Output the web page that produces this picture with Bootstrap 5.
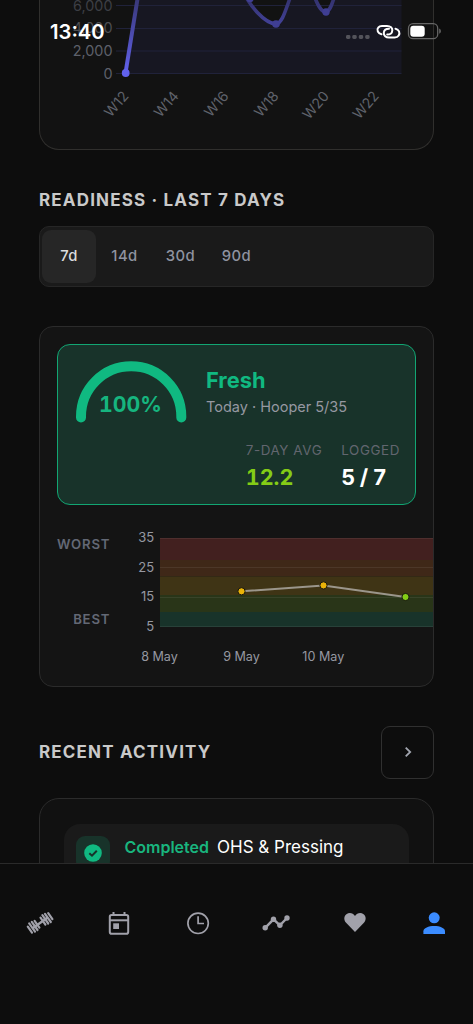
<!DOCTYPE html>
<html lang="en" data-bs-theme="dark">
<head>
<meta charset="utf-8">
<meta name="viewport" content="width=device-width, initial-scale=1">
<title>Training profile</title>
<link href="https://cdn.jsdelivr.net/npm/bootstrap@5.3.0/dist/css/bootstrap.min.css" rel="stylesheet">
<style>
  body { background: #0d0d0d; font-family: Inter, "Liberation Sans", sans-serif; color: #fff; height: 1024px; overflow: hidden; }
  svg { display: block; }
  svg text { font-family: Inter, "Liberation Sans", sans-serif; }
  .page { height: 863px; padding: 0 39px; }
  .panel { background: #141414; border: 1px solid #2b2b2b; border-radius: 14px; }
  .volume { height: 150px; border-top: 0; border-radius: 0 0 20px 20px; background: #121212; border-color: #302f2d; }
  .title { font-size: 17px; font-weight: 650; letter-spacing: 1.17px; line-height: 24px; color: #c9c9c9; margin: 0; white-space: nowrap; }
  .title-readiness { margin-top: 37.5px; }
  .ranges { height: 61px; margin-top: 14.5px; padding: 3px 2px; background: #1a1a1a; border: 1px solid #262626; border-radius: 10px; }
  .ranges .btn { width: 56px; height: 53px; padding: 0; border: 0; border-radius: 9px; font-size: 14.8px; font-weight: 500; letter-spacing: .45px; color: #8f93a0; }
  .ranges .btn + .btn { position: relative; left: .5px; }
  .ranges .btn.active { width: 54px; background: #262626; color: #dcdcde; }
  .readiness { height: 361px; margin-top: 39px; padding: 17px 0 0; }
  .score { height: 161px; margin: 0 17px; background: #18332a; border: 1.5px solid #12a673; border-radius: 13px; }
  .state { left: 148px; top: 21px; }
  .state-name { font-size: 21.8px; line-height: 28px; font-weight: 650; color: #10b981; }
  .state-note { font-size: 14.5px; line-height: 20px; color: #9698a1; margin-top: 3px; white-space: nowrap; }
  .stats { padding: 12px 15px 0 0; gap: 19px; }
  .stat-label { font-size: 13.4px; line-height: 18px; color: #62666f; letter-spacing: .6px; white-space: nowrap; }
  .stat-value { font-size: 21.6px; line-height: 28px; font-weight: 700; margin-top: 4px; font-variant-numeric: tabular-nums; }
  .lime { color: #84cc16; }
  .ratio { word-spacing: -1.2px; }
  .tabular { font-variant-numeric: tabular-nums; }
  .more { width: 53px; height: 53px; border: 1px solid #303030; border-radius: 9px; padding: 0; }
  .activity { height: 100px; margin-top: 19px; padding: 25px 24px 0; border-radius: 20px; background: #111; border-width: 1.5px; }
  .entry { height: 75px; background: #1a1a1a; border-radius: 16px; padding: 12px 12px 0; font-size: 17px; line-height: 22px; white-space: nowrap; }
  .entry-icon { width: 34px; height: 34px; border-radius: 9px; background: #18332a; }
  .done { color: #19b57e; font-weight: 600; font-size: 16px; }
  .tabs-bar { height: 161px; border-top: 1px solid #2a2a2a; background: #0d0d0d; padding-left: 1px; }
  .tabs-bar a { width: 78.8px; height: 118px; }
  .status { top: 0; height: 64px; }
  .clock { left: 50px; top: 18px; font-size: 20.2px; line-height: 28px; font-weight: 600; }
  .signals { left: 344px; top: 20px; }
</style>
</head>
<body>
<header class="status position-absolute start-0 w-100 z-3">
  <div class="clock position-absolute">13:40</div>
  <svg class="signals position-absolute" width="100" height="24" viewBox="344 20 100 24" fill="none">
    <g fill="#53535a"><rect x="346" y="35" width="4.4" height="4" rx="1.4"/><rect x="352.3" y="35" width="4.4" height="4" rx="1.4"/><rect x="358.8" y="35" width="4.4" height="4" rx="1.4"/><rect x="365.2" y="35" width="4.4" height="4" rx="1.4"/></g>
    <g stroke="#fff" stroke-width="2" stroke-linecap="round">
      <path d="M381.5 34.2C378 33.5 376.3 30 378.2 27.6C379.3 26.1 380.4 25.9 382 25.9H387C390.5 25.9 392.5 28 392.3 30.5C392.1 33.3 390 34.6 387.2 34.6"/>
      <path d="M395.5 28.7C399 29.4 400.3 33 398.7 35.5C397.6 37.2 396.2 37.5 394.7 37.5H389C385.8 37.5 383.6 35.5 383.8 32.8C384 30 386.4 28.7 389 28.7"/>
    </g>
    <rect x="408.5" y="23.7" width="29.2" height="15" rx="4.5" stroke="#666" stroke-width="1.3"/>
    <rect x="410.3" y="25.7" width="14.4" height="11" rx="3" fill="#fff"/>
    <path d="M439.3 28.6C441.2 29.4 441.2 33 439.3 33.8Z" fill="#777"/>
  </svg>
</header>

<main class="page overflow-hidden">
  <section class="panel volume overflow-hidden">
    <svg width="393" height="149" viewBox="40 0 393 149">
      <defs><linearGradient id="line" x1="0" y1="0" x2="0" y2="73" gradientUnits="userSpaceOnUse"><stop stop-color="#393879"/><stop offset="1" stop-color="#6262ed"/></linearGradient>
      <linearGradient id="dip" x1="0" y1="0" x2="0" y2="26" gradientUnits="userSpaceOnUse"><stop stop-color="#34336f"/><stop offset="1" stop-color="#43429b"/></linearGradient></defs>
      <path d="M125.5 73L137.5 0H248C260 12 268 24 276 24C282 23 285 12 289 0H315C319 8 322 12 326 12C330 11 332 4 333 0H401.5V73Z" fill="#171722"/>
      <g stroke="#20223a"><path d="M116 5.5H401.5M116 28.5H401.5M116 51H401.5M116 73.5H401.5"/></g>
      <path d="M125.5 73L137.8 -3" stroke="url(#line)" stroke-width="4"/>
      <path d="M246 -3C250 4 263 23 276 24C282 23 285 12 290 -2M315 -2C319 8 322 12 326 12C330 11 332 4 334 -2" fill="none" stroke="url(#dip)" stroke-width="3.6"/>
      <g fill="#3f3e93"><circle cx="250" cy="-1.5" r="3.7"/><circle cx="276" cy="24" r="3.8"/><circle cx="326" cy="12" r="3.7"/></g>
      <circle cx="125.7" cy="73" r="3.9" fill="#6262ed"/>
      <g font-size="14.4" text-anchor="end" fill="#5d606a"><text x="112.5" y="10.5" fill="#3d3f45">6,000</text><text x="112.5" y="33.3" fill="#4d4e52">4,000</text><text x="112.5" y="56">2,000</text><text x="112.5" y="78.6">0</text></g>
      <g font-size="14.2" text-anchor="end" fill="#5f626b">
        <text transform="translate(129.5 96.5) rotate(-49)">W12</text><text transform="translate(179.5 96.5) rotate(-49)">W14</text><text transform="translate(229.5 96.5) rotate(-49)">W16</text><text transform="translate(279.5 96.5) rotate(-49)">W18</text><text transform="translate(329.8 96.5) rotate(-49)">W20</text><text transform="translate(379.8 96.5) rotate(-49)">W22</text>
      </g>
    </svg>
  </section>

  <h2 class="title title-readiness">READINESS · LAST 7 DAYS</h2>
  <div class="ranges d-flex" role="group">
    <button class="btn active">7d</button><button class="btn">14d</button><button class="btn">30d</button><button class="btn">90d</button>
  </div>

  <section class="panel readiness overflow-hidden">
    <div class="score position-relative">
      <svg width="140" height="84" viewBox="58 344.5 140 84">
        <path d="M81 417V416A49.8 49.8 0 0 1 181.3 416V417" fill="none" stroke="#10b981" stroke-width="10" stroke-linecap="round"/>
        <text class="tabular" x="130.5" y="411.8" text-anchor="middle" font-size="21.3" font-weight="650" fill="#16b57f">100%</text>
      </svg>
      <div class="state position-absolute">
        <div class="state-name">Fresh</div>
        <div class="state-note">Today · Hooper 5/35</div>
      </div>
      <div class="stats d-flex justify-content-end">
        <div><div class="stat-label">7-DAY AVG</div><div class="stat-value lime">12.2</div></div>
        <div><div class="stat-label">LOGGED</div><div class="stat-value ratio">5 / 7</div></div>
      </div>
    </div>
    <svg width="394" height="160" viewBox="40 505 394 160">
      <path fill="#42201f" d="M160 538H434V560H160z"/><path fill="#3f2818" d="M160 560H434V576.5H160z"/><path fill="#3f3415" d="M160 576.5H434V595H160z"/><path fill="#293518" d="M160 595H434V612H160z"/><path fill="#18332a" d="M160 612H434V627H160z"/>
      <g stroke="#fff" stroke-opacity=".07"><path d="M160 538.5H434M160 567.5H434M160 597.5H434M160 626.5H434"/></g>
      <path d="M241.5 591.3L323.5 585.4L405.5 597" fill="none" stroke="#9b968b" stroke-width="2"/>
      <g stroke="#17170f"><circle cx="241.5" cy="591.3" r="3.6" fill="#eab308"/><circle cx="323.5" cy="585.4" r="3.6" fill="#eab308"/><circle cx="405.5" cy="597" r="3.6" fill="#84cc16"/></g>
      <g font-size="13.2" font-weight="600" letter-spacing=".8" fill="#636875" text-anchor="end"><text x="110.3" y="549.2">WORST</text><text x="110.3" y="624.2">BEST</text></g>
      <g font-size="13" fill="#9698a1" text-anchor="end"><text x="154.2" y="542.2">35</text><text x="154.2" y="571.7">25</text><text x="154.2" y="601.3">15</text><text x="154.2" y="630.6">5</text></g>
      <g font-size="12.6" fill="#9698a1" text-anchor="middle"><text x="159.5" y="660.6">8 May</text><text x="241.5" y="660.6">9 May</text><text x="323.3" y="660.6">10 May</text></g>
    </svg>
  </section>

  <div class="d-flex align-items-center justify-content-between" style="margin-top:38.5px">
    <h2 class="title">RECENT ACTIVITY</h2>
    <button class="btn more d-flex align-items-center justify-content-center" aria-label="All activity">
      <svg width="12" height="14" viewBox="0 0 12 14" fill="none" stroke="#a1a5af" stroke-width="1.8"><path d="M3.7 2.6L8.2 7L3.7 11.4"/></svg>
    </button>
  </div>
  <section class="panel activity">
    <div class="entry d-flex">
      <div class="entry-icon d-flex align-items-center justify-content-center flex-shrink-0">
        <svg width="18" height="18" viewBox="0 0 18 18"><circle cx="9" cy="9" r="8.8" fill="#10b981"/><path d="M5.3 9.2L8 11.7L12.8 6.8" fill="none" stroke="#18332a" stroke-width="2"/></svg>
      </div>
      <div style="margin-left:14.5px"><span class="done">Completed</span><span style="margin-left:8px">OHS &amp; Pressing</span></div>
    </div>
  </section>
</main>

<nav class="tabs-bar d-flex position-relative" aria-label="Main">
  <a class="d-flex align-items-center justify-content-center" href="#" aria-label="Workout"><svg width="30" height="26" viewBox="25 910 30 26" fill="none" stroke="#a1a1aa" stroke-linecap="round">
    <path d="M33 928L47 918" stroke-width="2.4"/><path d="M27.8 926.6L32 932.6M29.2 923.4L35 931.7M31.8 921.8L37.5 930M34.6 920.8L39.4 927.6M40.5 917.6L45.4 924.6M42.4 915.2L48.2 923.5M45 913.8L50.8 922M48.2 913.2L52.4 919.2" stroke-width="2.2"/></svg></a>
  <a class="d-flex align-items-center justify-content-center" href="#" aria-label="Calendar"><svg width="26" height="26" viewBox="106 910 26 26" fill="none" stroke="#a1a1aa"><rect x="109.8" y="915" width="18.4" height="18.7" rx="1.8" stroke-width="2"/><path d="M110 920.3H128" stroke-width="2"/><path d="M113.5 912V915M124.5 912V915" stroke-width="2"/><path fill="#a1a1aa" stroke="none" d="M113.2 923.3H119V929H113.2z"/></svg></a>
  <a class="d-flex align-items-center justify-content-center" href="#" aria-label="History"><svg width="26" height="26" viewBox="184.5 910 26 26" fill="none" stroke="#a1a1aa" stroke-width="1.7"><circle cx="197.6" cy="923.3" r="10.2"/><path d="M197.6 916.2V923.5H203.5"/></svg></a>
  <a class="d-flex align-items-center justify-content-center" href="#" aria-label="Progress"><svg width="30" height="26" viewBox="261.5 910 30 26" fill="#a1a1aa" stroke="#a1a1aa"><path d="M265.7 927.8L274 919.3L280.4 925.3L287.5 918" fill="none" stroke-width="2.4"/><g stroke="none"><circle cx="265.7" cy="927.8" r="2.7"/><circle cx="274" cy="919.3" r="2.7"/><circle cx="280.4" cy="925.3" r="2.7"/><circle cx="287.5" cy="918" r="2.7"/></g></svg></a>
  <a class="d-flex align-items-center justify-content-center" href="#" aria-label="Health"><svg width="26" height="26" viewBox="342.3 910 26 26" fill="#a1a1aa"><path d="M355.3 932L346.4 922.8C343.8 920 344.2 915.9 346.7 914.2C349.6 912.2 353.4 913 355.3 916C357.2 913 361 912.2 363.9 914.2C366.4 915.9 366.8 920 364.2 922.8Z"/></svg></a>
  <a class="d-flex align-items-center justify-content-center" href="#" aria-label="Profile"><svg width="26" height="26" viewBox="421 910 26 26" fill="#3b8cff"><circle cx="434.2" cy="917.8" r="5.5"/><path d="M423.4 934V931.2C423.4 928 428.5 926 434.2 926S445 928 445 931.2V934Z"/></svg></a>
</nav>
<script src="https://cdn.jsdelivr.net/npm/bootstrap@5.3.0/dist/js/bootstrap.bundle.min.js"></script>
</body>
</html>
